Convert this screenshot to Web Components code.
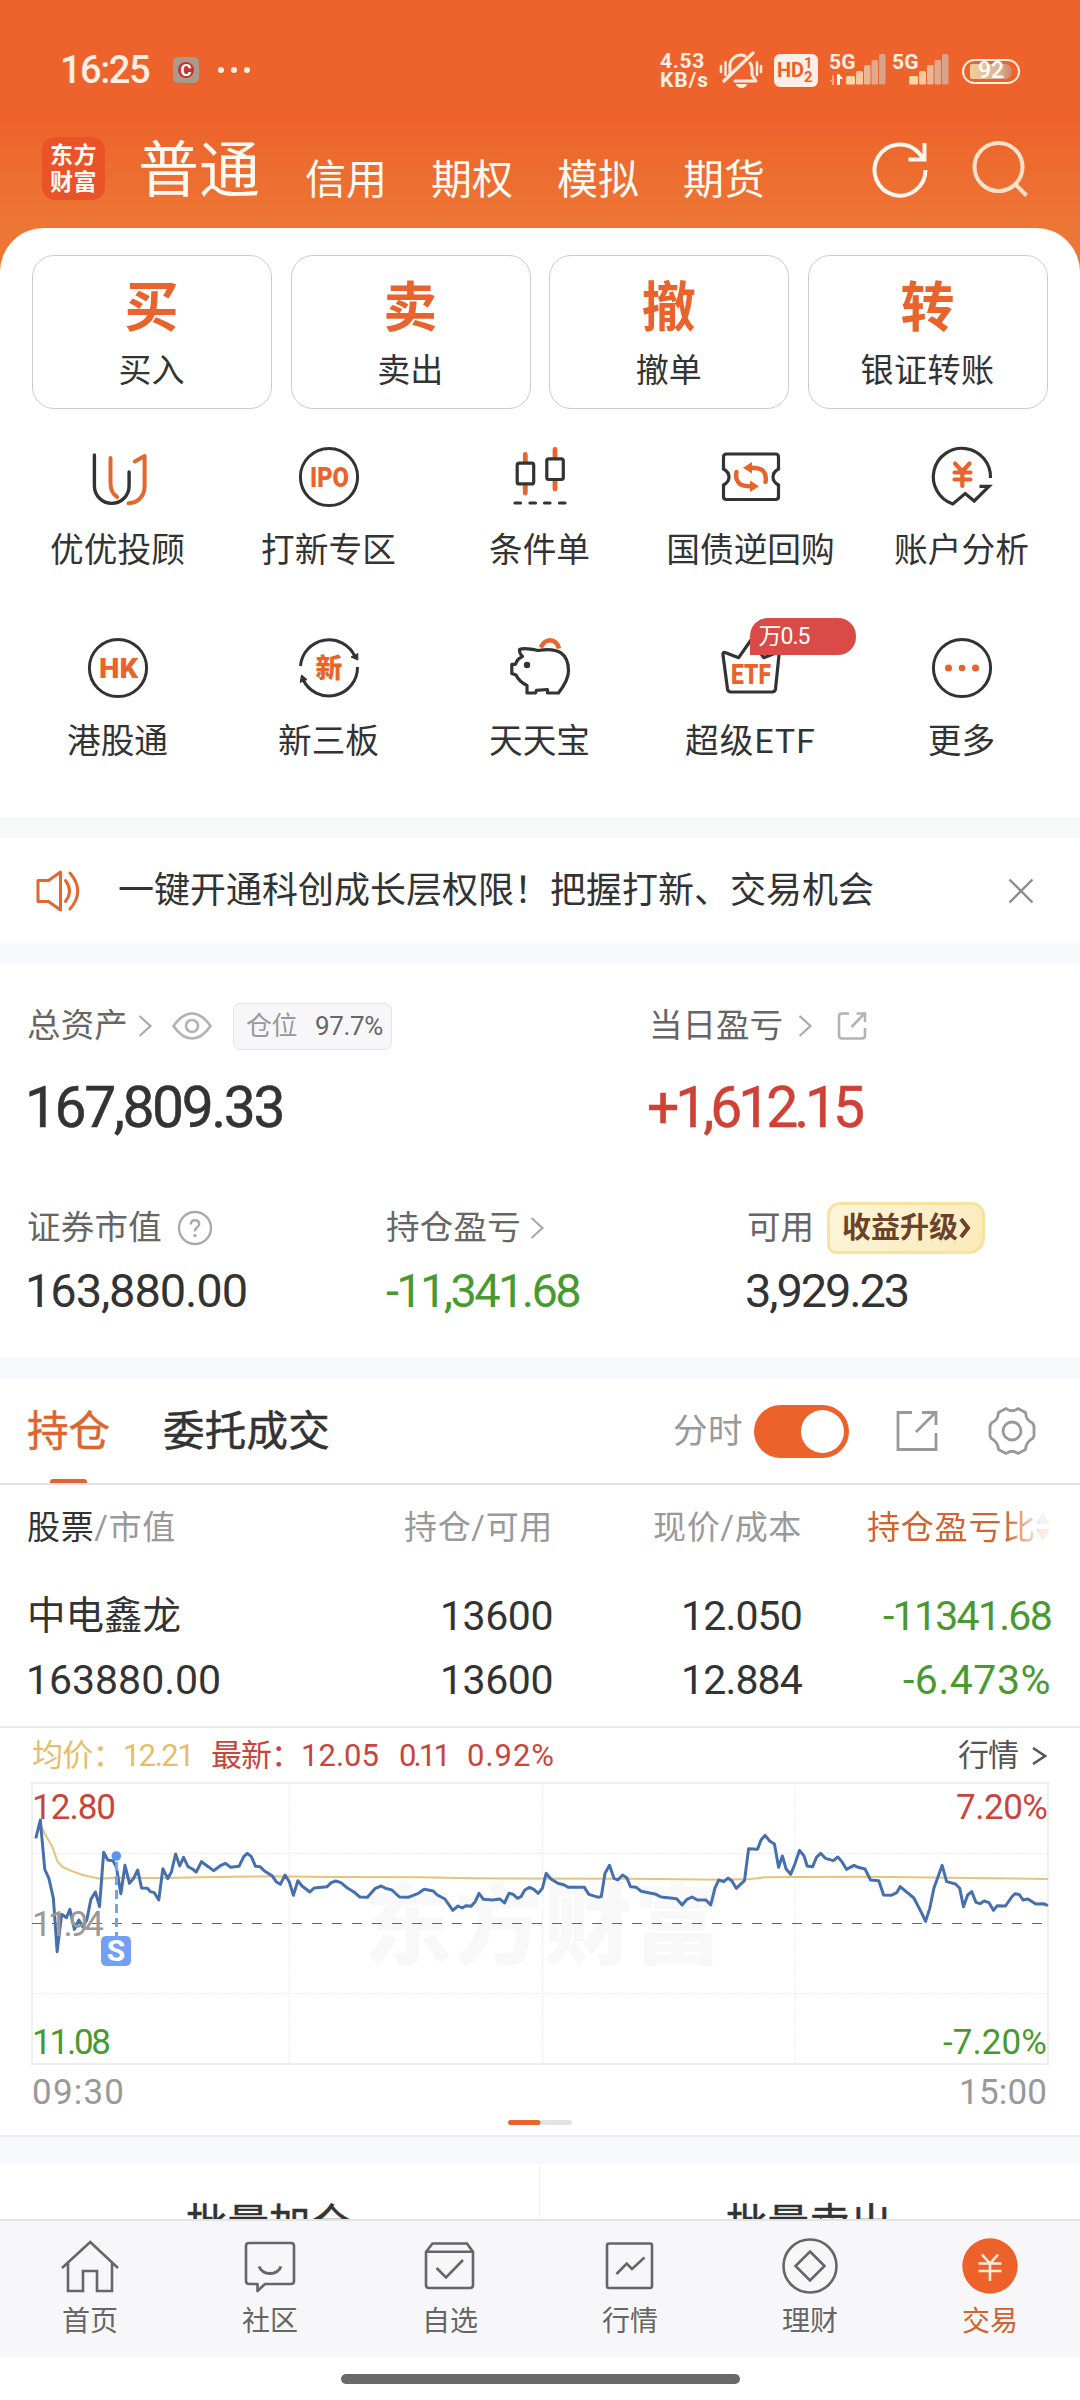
<!DOCTYPE html>
<html lang="zh-CN">
<head>
<meta charset="utf-8">
<title>交易</title>
<style>
    html, body {
        margin: 0;
        padding: 0;
    }

    body {
        width: 1080px;
        height: 2400px;
        overflow: hidden;
        background: #fff;
        color: #333;
        font-family: Roboto, "Noto Sans CJK SC", sans-serif;
        line-height: 1;
    }
</style>
</head>
<body>
<trade-app></trade-app>

<script>
const ICONS = {
    mute: [44, 38, `<g fill="none" stroke="#ffe9dd" stroke-width="3" stroke-linecap="round">
        <path d="M11 23V17A11 11 0 0 1 26 5M31 12A11 11 0 0 1 33 20V24L37 30H16" stroke-linejoin="round"/>
        <path d="M5 30L34 2" stroke-width="3.4"/>
        <path d="M2 15V21M6.500 11V24M38 11V24M42 15V21" stroke-width="2.500"/></g>
        <path d="M17 33H28A5.500 4 0 0 1 17 33Z" fill="#ffe9dd"/>`],
    dataArrows: [15, 12, `<path d="M5 1V11H3V8L0 6H3V1Z" fill="#f6a888"/><path d="M8 0H10L14 5H11V11H8Z" fill="#fff"/>`],
    signal: [40, 31, `<rect x="0" y="22" width="9" height="8.500" rx="1.500" fill="#ffd8a8"/><rect x="10" y="17" width="7" height="13.500" rx="1.500" fill="#fac79a"/><rect x="18" y="11" width="6.500" height="19.500" rx="1.500" fill="#ecb692"/><rect x="25.500" y="6" width="6.500" height="24.500" rx="1.500" fill="#e2a98c"/><rect x="33" y="0" width="6.500" height="30.500" rx="1.500" fill="#d9a28b"/>`],
    refresh: [64, 64, `<g fill="none" stroke="#fff6ee" stroke-width="4"><path d="M57.500 33A25.500 25.500 0 1 1 50 15L55 21"/><path d="M56.500 6V22.500H40.500"/></g>`],
    search: [64, 64, `<g fill="none" stroke="#ffe0cc" stroke-width="4"><circle cx="30.500" cy="30" r="24"/><path d="M47 47L58.500 58.500"/></g>`],
    advisor: [60, 60, `<g fill="none" stroke-width="3.400" stroke-linecap="round" stroke-linejoin="round"><path d="M6.400 8V39A17.300 17.300 0 0 0 41.100 39V25" stroke="#333"/><path d="M22.500 11V36Q22.500 46 29.200 50M40.500 56.300C51 56 56.600 48 56.600 39V9L46.800 14.500" stroke="#e2682f" stroke-width="4"/></g>`],
    ipo: [60, 60, `<circle cx="30" cy="30" r="28.600" fill="none" stroke="#333" stroke-width="3"/><text x="11" y="39.800" font-size="27" font-weight="900" fill="#e8642c" textLength="39" lengthAdjust="spacingAndGlyphs">IPO</text>`],
    candles: [60, 60, `<g stroke-linecap="round" fill="#fff"><path d="M15.300 7.500V46M45 2.500V42" stroke="#e2682f" stroke-width="4.800"/><g stroke="#333" stroke-width="3.200"><rect x="7.200" y="16.200" width="16.500" height="20.700" rx="2"/><rect x="36.800" y="11.800" width="16.500" height="20.700" rx="2"/><path d="M5 56H10.500M20 56H25.500M34.500 56H40M49.500 56H55"/></g></g>`],
    bond: [60, 60, `<path d="M5.500 7H54.500Q57.500 7 57.500 10V22Q52 25 52 30Q52 35 57.500 38V49.500Q57.500 52.500 54.500 52.500H5.500Q2.500 52.500 2.500 49.500V38Q8 35 8 30Q8 25 2.500 22V10Q2.500 7 5.500 7Z" fill="none" stroke="#333" stroke-width="3.200"/>
        <g fill="none" stroke="#e8642c" stroke-width="4.400" stroke-linecap="round"><path d="M44.500 35Q46 27 41 23Q38 20.700 30 20.700M15.500 25Q14 33 19 37Q22 39.300 30 39.300"/></g><path d="M22 20.700L31 15V26.400ZM38 39.300L29 33.600V45Z" fill="#e8642c"/>`],
    analysis: [60, 60, `<g fill="none"><path d="M58.500 31A28.600 28.600 0 1 0 20.800 57L33.200 46.500L42.200 54L57 39.300H47.500" stroke="#333" stroke-width="3.200"/><path d="M23 16.500L30.300 24.500L37.500 16.500M30.300 25V39M22.500 25.500H38.500M22.500 32.500H38.500" stroke="#e8642c" stroke-width="4.200" stroke-linecap="round"/></g>`],
    hk: [60, 60, `<circle cx="30" cy="30" r="28.600" fill="none" stroke="#333" stroke-width="3"/><text x="11" y="39.800" font-size="27" font-weight="900" fill="#e8642c" textLength="39" lengthAdjust="spacingAndGlyphs">HK</text>`],
    neeq: [60, 60, `<g fill="none" stroke="#333" stroke-width="3"><path d="M1.500 28A28.600 28.600 0 0 1 56 18.500M58.500 29A28.600 28.600 0 0 1 4 41.500"/></g><path d="M58.800 15.500V22L52 19ZM1.200 44.500L2.500 37L8 41.500Z" fill="#333" stroke="#333" stroke-linejoin="round"/><text x="30" y="40" text-anchor="middle" font-size="27" font-weight="900" fill="#e8642c">新</text>`],
    pig: [60, 60, `<path d="M9.500 11.500Q14 9.500 28 12.500Q58.500 7 58.500 33Q58.500 42 48.500 55H37.500V51.500L26.500 52.300L25.500 55H17V47.500Q9 43.500 6 37L1.800 35.500V26.300H5.500Q7 21 12.500 18.500Q9 15 9.500 11.500Z" fill="none" stroke="#333" stroke-width="3.200" stroke-linejoin="round"/><circle cx="17" cy="27" r="3.200" fill="#333"/><path d="M30.800 9.500Q34 2.500 40 2.200Q47 2.500 49 10.500" fill="none" stroke="#e2682f" stroke-width="4.500"/>`],
    etf: [60, 60, `<path d="M4 14.500L17.700 19.700L30 2L42.800 19.700L56 14.500Q58.500 14 58 17L54.500 51Q54 54 51 54H10Q7 54 6.500 51L2 17Q1.500 14 4 14.500Z" fill="none" stroke="#333" stroke-width="3.200" stroke-linejoin="round"/><text x="10" y="45.500" font-size="27" font-weight="900" fill="#e8642c" textLength="40" lengthAdjust="spacingAndGlyphs">ETF</text>`],
    more: [60, 60, `<circle cx="30" cy="30" r="28.600" fill="none" stroke="#333" stroke-width="3"/><g fill="#e8642c"><circle cx="16.500" cy="30" r="3.600"/><circle cx="30" cy="30" r="3.300"/><circle cx="43.500" cy="30" r="3.600"/></g>`],
    speaker: [48, 42, `<g fill="none" stroke="#e2682f" stroke-width="3" stroke-linejoin="round" stroke-linecap="round"><path d="M2 10.500H12.500L24.500 2V40L12.500 31.500H2ZM24.500 3V39"/><path d="M29.500 10.500Q37.500 21 29.500 31.500M34 3Q49.500 21 34 39"/></g>`],
    close: [26, 26, `<path d="M1.500 1.500L24.500 24.500M24.500 1.500L1.500 24.500" stroke="#8d8d8d" stroke-width="2.400"/>`],
    chevron: [14, 22, `<path d="M1.500 1L12.500 11L1.500 21" fill="none" stroke="#aaa" stroke-width="2.200"/>`],
    eye: [40, 28, `<g fill="none" stroke="#b3b3b3" stroke-width="2.700"><path d="M1.500 14Q10 1.500 20 1.500T38.500 14Q30 26.500 20 26.500T1.500 14Z"/><circle cx="20" cy="14" r="6"/></g>`],
    share: [30, 30, `<g fill="none" stroke="#b3b3b3" stroke-width="2.600"><path d="M12 2.500H5Q2 2.500 2 5.500V24.500Q2 27.500 5 27.500H25Q28 27.500 28 24.500V17M14.500 16L27.500 2.500M19.500 2.500H28V11"/></g>`],
    help: [36, 36, `<circle cx="18" cy="18" r="16" fill="none" stroke="#aaa" stroke-width="2.400"/><path d="M13.800 14.500Q14 10.300 18 10.300T22.200 14Q22.200 16 20 17.500T18 21.300" fill="none" stroke="#aaa" stroke-width="2.400"/><circle cx="18" cy="25.500" r="1.700" fill="#aaa"/>`],
    openLink: [42, 42, `<path d="M16 2.500H2V39.500H40V23M20 22L38 4M26 2.500H40V15" fill="none" stroke="#999" stroke-width="2.800"/>`],
    gear: [48, 50, `<g fill="none" stroke="#999" stroke-width="2.800" stroke-linejoin="round"><path d="M18 2.500Q24 7 30 2.500L37.500 6.500Q38 14.500 44.500 17L46 20V30L44.500 32.500Q38 36 37.500 43.500L30 47.500Q24 43 18 47.500L10.500 43.500Q10 36 3.500 32.500L2 30V20L3.500 17Q10 14.500 10.500 6.500Z"/><circle cx="24" cy="25" r="9"/></g>`],
    home: [60, 60, `<path d="M2 32L30.200 6L58 32M8 27V55H23V35H37V55H52V27" fill="none" stroke="#666" stroke-width="2.600"/>`],
    community: [60, 60, `<g fill="none" stroke="#666" stroke-width="2.600" stroke-linejoin="round"><path d="M9 7H51Q54 7 54 10V45Q54 48 51 48H25L17.500 55V48H9Q6 48 6 45V10Q6 7 9 7Z"/><path d="M19 30.500Q22 37.500 30 37.500T41 30.500" stroke-width="3"/></g>`],
    watchlist: [60, 60, `<path d="M12.500 7.500H47L53 16V49Q53 52 50 52H9Q6 52 6 49V16ZM6 15.700H53M16.600 32L26 41.500L43 24" fill="none" stroke="#666" stroke-width="2.600"/>`],
    market: [60, 60, `<path d="M9 7.500H50Q52 7.500 52 9.500V50Q52 52 50 52H9Q7 52 7 50V9.500Q7 7.500 9 7.500ZM16.500 38L26.700 27.500L32 33L44.500 21.500" fill="none" stroke="#666" stroke-width="2.600"/>`],
    wealth: [60, 60, `<path d="M30 15.500L44.500 30L30 44.500L15.500 30Z" fill="none" stroke="#666" stroke-width="2.600"/><circle cx="30" cy="30" r="26.500" fill="none" stroke="#666" stroke-width="2.600"/>`],
    trade: [60, 60, `<circle cx="30" cy="30" r="27.700" fill="#ec622a"/><path d="M22 18.500L30 27.500L38 18.500M30 27V45M18.500 27.500H41.500M18.500 35H41.500" fill="none" stroke="#ffeade" stroke-width="2.600"/>`],
};

class BaseElement extends HTMLElement {
    constructor() {
        super();
        this.attachShadow({ mode: "open" });
        this.shadowRoot.innerHTML = this.render();
    }

    render() {
        return "<slot></slot>";
    }
}

window.customElements.define("app-icon", class extends BaseElement {
    render() {
        const [width, height, body] = ICONS[this.getAttribute("name")];
        return `
            <style>
                :host { display: block; flex: none; width: ${width}px; height: ${height}px; }
                svg { display: block; overflow: visible; }
            </style>
            <svg width="${width}" height="${height}" viewBox="0 0 ${width} ${height}">${body}</svg>
        `;
    }
});

window.customElements.define("status-bar", class extends BaseElement {
    render() {
        return `
            <style>
                :host { display: flex; align-items: center; height: 140px; padding: 0 60px 0 60px; color: #ffeee4; box-sizing: border-box; }
                .time { font-size: 38px; font-weight: 500; }
                .app { width: 26px; height: 26px; margin-left: 24px; border-radius: 5px; background: #a89a8c; display: grid; place-items: center; }
                .app b { width: 16px; height: 16px; border-radius: 8px; background: #c8322c; color: #fff; font-size: 17px; text-align: center; line-height: 16px; }
                .dots { display: flex; gap: 7px; margin-left: 19px; flex: 1; }
                .dots i { width: 6px; height: 6px; border-radius: 3px; background: #ffeee4; }
                .speed { font-size: 21px; font-weight: 700; line-height: 19px; width: 49px; padding-top: 1px; }
                .hd { display: flex; align-items: center; width: 44px; height: 33px; margin-left: 11px; border-radius: 6px; background: #ffeee8; color: #e8612c; font-weight: 700; font-size: 20px; box-sizing: border-box; padding-left: 3px; }
                .hd span:last-child { font-size: 15px; line-height: 14px; }
                .cell { display: grid; grid-template-columns: 17px 40px; width: 57px; height: 32px; margin-top: -1px; font-size: 21px; font-weight: 700; }
                .cell > * { grid-row: 1; }
                .cell .net { grid-column: 1 / 3; line-height: 16px; }
                .cell .bars { grid-column: 2; }
                .cell .arrows { grid-column: 1; align-self: end; }
                .battery { display: flex; width: 58px; height: 25px; box-sizing: border-box; margin: 2px 0 0 13px; padding: 3px 6px; border: 2.500px solid #ffeee4; border-radius: 13px; }
                .battery span { flex: 1; border-radius: 2px 7px 7px 2px; background: linear-gradient(90deg, #f0cf98, #dbb292 70%, #cc866a); font-size: 23px; font-weight: 500; line-height: 14px; text-align: center; color: #fff; }
            </style>
            <fit-text class="time" width="89">16:25</fit-text>
            <div class="app"><b>C</b></div>
            <div class="dots"><i></i><i></i><i></i></div>
            <div class="speed"><fit-text width="45">4.53</fit-text><fit-text width="49">KB/s</fit-text></div>
            <app-icon name="mute" style="margin-left: 10px"></app-icon>
            <div class="hd"><fit-text width="27">HD</fit-text><span>1<br>2</span></div>
            <div class="cell" style="margin-left: 11px"><fit-text class="net" width="27">5G</fit-text><app-icon class="bars" name="signal"></app-icon><app-icon class="arrows" name="dataArrows"></app-icon></div>
            <div class="cell" style="margin-left: 6px"><fit-text class="net" width="27">5G</fit-text><app-icon class="bars" name="signal"></app-icon></div>
            <div class="battery"><span>92</span></div>
        `;
    }
});

window.customElements.define("account-header", class extends BaseElement {
    render() {
        return `
            <style>
                :host { display: flex; height: 63px; margin: -3px 48px 0 42px; color: #fff9f2; }
                .logo { display: grid; align-content: center; justify-items: center; gap: 4px; width: 63px; height: 63px; border-radius: 13px; background: #ea5228; font-size: 23px; font-weight: 700; }
                nav { display: flex; align-items: flex-end; flex: 1; gap: 44px; font-size: 41px; padding: 1px 0 0 33px; margin-bottom: -1px; }
                .current { font-size: 61px; margin-right: 1px; margin-bottom: -1px; }
            </style>
            <div class="logo"><fit-text width="47">东方</fit-text><fit-text width="47">财富</fit-text></div>
            <nav>
                <fit-text class="current" width="122">普通</fit-text>
                <fit-text width="82">信用</fit-text>
                <fit-text width="82">期权</fit-text>
                <fit-text width="82">模拟</fit-text>
                <fit-text width="82">期货</fit-text>
            </nav>
            <app-icon name="refresh"></app-icon>
            <app-icon name="search" style="margin-left: 36px"></app-icon>
        `;
    }
});

window.customElements.define("action-card", class extends BaseElement {
    render() {
        return `
            <style>
                :host { display: flex; flex-direction: column; align-items: center; box-sizing: border-box; height: 154px; padding: 26px 1px 0 0; border: 1.500px solid #ccc; border-radius: 22px; font-size: 33px; }
                b { margin-bottom: 18px; color: #e8642c; font-size: 54px; line-height: 54px; }
            </style>
            <b>${this.getAttribute("mark")}</b>
            <slot></slot>
        `;
    }
});

window.customElements.define("quick-entry", class extends BaseElement {
    render() {
        const badge = this.getAttribute("badge");
        return `
            <style>
                :host { display: flex; flex-direction: column; align-items: center; gap: 27px; font-size: 33.700px; }
                .art { position: relative; }
                .badge { position: absolute; left: 29px; top: -20px; width: 106px; height: 37px; box-sizing: border-box; padding-left: 9px; border-radius: 18px 18px 18px 0; background: #da4a46; color: #fff; font-size: 23px; line-height: 37px; }
            </style>
            <div class="art">
                <app-icon name="${this.getAttribute("icon")}"></app-icon>
                ${badge ? `<div class="badge"><fit-text width="51">${badge}</fit-text></div>` : ""}
            </div>
            <slot></slot>
        `;
    }
});

window.customElements.define("notice-bar", class extends BaseElement {
    render() {
        return `
            <style>
                :host { display: flex; align-items: center; height: 105px; padding: 0 46px 0 36px; font-size: 36px; background: #fff; }
                slot { display: block; flex: 1; margin-left: 34px; }
            </style>
            <app-icon name="speaker"></app-icon>
            <slot></slot>
            <app-icon name="close"></app-icon>
        `;
    }
});

window.customElements.define("asset-panel", class extends BaseElement {
    render() {
        return `
            <style>
                :host { display: block; height: 394px; box-sizing: border-box; padding: 36px 27px 0; background: #fff; }
                .row { display: grid; grid-template-columns: 622px 1fr; }
                .detail { grid-template-columns: 359px 361px 1fr; margin-top: 66px; }
                .label { display: flex; align-items: center; height: 52px; color: #666; font-size: 33.500px; }
                .total { font-size: 57px; margin: 27px 0 0 -2px; display: block; -webkit-text-stroke: .5px; }
                .value { font-size: 47px; margin: 13px 0 0 -2px; display: block; }
                .tag { display: flex; align-items: center; box-sizing: border-box; width: 159px; height: 47px; margin-left: 21px; padding-left: 12px; gap: 18px; border: 1.500px solid #e3e4e8; border-radius: 7px; background: #f7f7fa; font-size: 26px; color: #999; }
                .tag fit-text:last-child { color: #666; }
                .red { color: #cf4036; }
                .green { color: #489a30; margin-left: 0; }
                .upgrade { display: flex; align-items: center; gap: 1px; box-sizing: border-box; width: 158px; height: 52px; margin-left: 13px; padding-left: 12px; border: 3px solid #f6e49c; border-radius: 13px 13px 16px 9px; background: linear-gradient(135deg, #fef5dc, #fbe9b8); color: #6a432a; font-size: 29px; font-weight: 700; }
            </style>
            <div class="row">
                <div>
                    <div class="label">
                        <fit-text width="101">总资产</fit-text>
                        <app-icon name="chevron" style="margin-left: 10px"></app-icon>
                        <app-icon name="eye" style="margin-left: 20px"></app-icon>
                        <div class="tag"><fit-text width="51">仓位</fit-text><fit-text width="68">97.7%</fit-text></div>
                    </div>
                    <fit-text class="total" width="258">167,809.33</fit-text>
                </div>
                <div>
                    <div class="label">
                        <fit-text width="134">当日盈亏</fit-text>
                        <app-icon name="chevron" style="margin-left: 15px"></app-icon>
                        <app-icon name="share" style="margin-left: 25px"></app-icon>
                    </div>
                    <fit-text class="total red" width="214">+1,612.15</fit-text>
                </div>
            </div>
            <div class="row detail">
                <div>
                    <div class="label"><fit-text width="135">证券市值</fit-text><app-icon name="help" style="margin-left: 15px"></app-icon></div>
                    <fit-text class="value" width="222">163,880.00</fit-text>
                </div>
                <div>
                    <div class="label"><fit-text width="135">持仓盈亏</fit-text><app-icon name="chevron" style="margin-left: 9px"></app-icon></div>
                    <fit-text class="value green" width="193">-11,341.68</fit-text>
                </div>
                <div>
                    <div class="label">
                        <fit-text width="67">可用</fit-text>
                        <div class="upgrade"><fit-text width="116">收益升级</fit-text>
                            <svg width="12" height="26" viewBox="0 0 12 26"><path d="M2 4L9 13L2 22" fill="none" stroke="#6a432a" stroke-width="4"/></svg>
                        </div>
                    </div>
                    <fit-text class="value" width="163">3,929.23</fit-text>
                </div>
            </div>
        `;
    }
});

window.customElements.define("toggle-switch", class extends BaseElement {
    render() {
        return `
            <style>
                :host { display: flex; justify-content: flex-end; box-sizing: border-box; width: 95px; height: 53px; padding: 5px; border-radius: 27px; background: #ec622a; }
                i { width: 43px; height: 43px; border-radius: 50%; background: #fff; }
            </style>
            <i></i>
        `;
    }
});

window.customElements.define("holding-table", class extends BaseElement {
    render() {
        return `
            <style>
                :host { display: block; height: 243px; box-sizing: border-box; padding: 19px 29px 0 27px; border-bottom: 2px solid #ebebeb; }
                .line { display: grid; grid-template-columns: 278px 248px 249px 249px; align-items: center; height: 46px; }
                .line > :not(:first-child) { justify-self: end; }
                .head { color: #999; font-size: 33px; margin-bottom: 42px; }
                .head span { color: #333; }
                .data { font-size: 41px; height: 48px; margin-bottom: 16px; }
                .name { font-size: 38.500px; }
                .green { color: #489a30; }
                .sort { display: flex; align-items: center; width: 184px; color: #d2652f; -webkit-mask-image: linear-gradient(90deg, #000 75%, rgba(0, 0, 0, .35) 89%, rgba(0, 0, 0, .12) 95%); mask-image: linear-gradient(90deg, #000 75%, rgba(0, 0, 0, .35) 89%, rgba(0, 0, 0, .12) 95%); }
            </style>
            <div class="line head">
                <fit-text width="149"><span>股票</span>/市值</fit-text>
                <fit-text width="149">持仓/可用</fit-text>
                <fit-text width="149">现价/成本</fit-text>
                <div class="sort"><fit-text width="169">持仓盈亏比</fit-text><svg width="14" height="30" viewBox="0 0 14 30"><path d="M7 0L14 12H0Z" fill="#999"/><path d="M0 17H14L7 29Z" fill="#ec622a"/></svg></div>
            </div>
            <div class="line data">
                <fit-text class="name" width="154">中电鑫龙</fit-text>
                <fit-text width="113">13600</fit-text>
                <fit-text width="121">12.050</fit-text>
                <fit-text class="green" width="168">-11341.68</fit-text>
            </div>
            <div class="line data">
                <fit-text width="195" style="margin-left: -1px">163880.00</fit-text>
                <fit-text width="113">13600</fit-text>
                <fit-text width="121">12.884</fit-text>
                <fit-text class="green" width="148">-6.473%</fit-text>
            </div>
        `;
    }
});

// Price points are plotted on a 3136 x 1110 raster and scaled down to the chart box.
window.customElements.define("minute-chart", class extends BaseElement {
    render() {
        const price = `104,205 117,150 130,298 142,325 155,385 166,545 179,433 193,443 203,418 216,478 229,450 240,470 252,450 264,388 277,366 289,410 301,247 313,270 328,272 338,292 351,371 363,286 376,340 388,325 400,300 411,354 428,355 437,365 448,368 461,390 473,296 487,326 498,305 510,252 522,288 533,262 546,290 559,297 570,306 585,275 605,290 620,302 640,287 655,280 670,292 694,289 708,260 718,250 730,260 742,289 755,290 768,303 790,317 802,335 814,343 828,315 840,335 852,376 865,332 877,348 900,366 912,354 950,350 962,338 975,333 990,338 1010,355 1028,366 1045,381 1067,382 1090,355 1107,348 1120,355 1138,360 1160,381 1185,382 1215,370 1232,358 1258,363 1270,375 1292,387 1315,421 1330,408 1342,414 1354,407 1368,409 1380,395 1391,370 1404,388 1430,390 1452,387 1465,399 1478,370 1490,373 1503,385 1513,380 1524,360 1538,352 1550,358 1563,370 1575,355 1586,310 1600,327 1620,340 1637,344 1650,352 1697,352 1710,373 1738,382 1746,380 1757,310 1770,286 1783,325 1794,330 1808,315 1820,323 1831,350 1848,352 1862,364 1905,373 1920,381 1965,386 1981,405 1995,388 2010,381 2025,390 2050,390 2064,405 2076,355 2087,330 2102,335 2114,324 2125,332 2138,355 2162,332 2174,236 2200,238 2210,210 2222,196 2235,213 2249,222 2261,292 2272,258 2283,297 2296,313 2308,283 2322,241 2335,258 2344,288 2360,290 2371,262 2383,250 2397,265 2420,272 2433,261 2445,275 2458,298 2480,286 2492,292 2512,297 2528,330 2552,332 2566,375 2588,376 2604,368 2614,350 2628,362 2654,384 2677,430 2688,454 2700,415 2712,355 2736,286 2749,335 2775,342 2787,355 2798,410 2810,375 2822,365 2834,397 2846,401 2858,393 2872,398 2885,421 2896,407 2920,408 2938,381 2948,371 2960,374 2971,390 2985,387 3008,402 3030,401 3043,407`;
        const average = `117,165 135,200 152,230 166,272 180,290 205,302 240,315 290,326 330,323 480,324 620,321 780,319 960,321 1220,322 1380,325 1840,326 2100,329 2180,327 2220,322 2300,321 2520,320 2640,322 2820,324 3043,327`;
        return `
            <style>
                :host { display: block; height: 367px; border-bottom: 2px solid #ebebeb; box-sizing: border-box; }
                svg { display: block; font-size: 35px; }
            </style>
            <svg width="1080" height="365" viewBox="0 0 1080 365">
                <text x="364" y="187" font-size="88" font-weight="900" fill="#f8f8f8" textLength="358">东方财富</text>
                <g fill="none">
                    <rect x="32" y="13" width="1016" height="281" stroke="#eee" stroke-width="2"/>
                    <path d="M32 83.500H1048M32 223.500H1048M289 13V294M542.500 13V294M795 13V294" stroke="#e6e6e6" stroke-dasharray="1.500 1.500"/>
                    <path d="M32 153.500H1048" stroke="#666" stroke-width="1.200" stroke-dasharray="10 10"/>
                </g>
                <text x="32" y="49" fill="#c8453d" textLength="84">12.80</text>
                <g transform="scale(.34435 .33333)" fill="none">
                    <polyline points="${average}" stroke="#e8c276" stroke-width="2" vector-effect="non-scaling-stroke"/>
                    <polyline points="${price}" stroke="#456fae" stroke-width="3" stroke-linejoin="round" vector-effect="non-scaling-stroke"/>
                </g>
                <path d="M116.500 92V166" stroke="#76a1e8" stroke-width="3" stroke-dasharray="9 5"/>
                <circle cx="116.300" cy="86" r="4.800" fill="#5b93f2"/>
                <rect x="101" y="166" width="30" height="30" rx="5" fill="#73a0f2"/>
                <text x="116" y="191" fill="#fff" font-size="30" font-weight="700" text-anchor="middle">S</text>
                <text x="32" y="166" fill="#999" textLength="72">11.94</text>
                <text x="32" y="284" fill="#489a30" textLength="79">11.08</text>
                <text x="956" y="49" fill="#c8453d" textLength="92">7.20%</text>
                <text x="943" y="284" fill="#489a30" textLength="104">-7.20%</text>
                <text x="32" y="334" fill="#999" textLength="92">09:30</text>
                <text x="959" y="334" fill="#999" textLength="88">15:00</text>
                <path d="M542 352.500H569.500" stroke="#e3e3e3" stroke-width="5" stroke-linecap="round"/>
                <path d="M510.500 352.500H538" stroke="#e2682f" stroke-width="5" stroke-linecap="round"/>
            </svg>
        `;
    }
});

window.customElements.define("holding-panel", class extends BaseElement {
    render() {
        return `
            <style>
                :host { display: block; height: 758px; background: #fff; }
                .tabs { display: flex; align-items: center; box-sizing: border-box; height: 106px; padding: 0 44px 0 27px; border-bottom: 2px solid #e2e2e2; font-size: 41.500px; }
                .tab { display: flex; flex-direction: column; align-items: center; height: 104px; box-sizing: border-box; }
                .active { padding-top: 32px; color: #dd652f; -webkit-text-stroke: .5px; }
                .active i { width: 37px; height: 6px; margin-top: 26px; border-radius: 3px 3px 0 0; background: #dd652f; }
                .second { margin: 2px auto 0 53px; -webkit-text-stroke: .5px; }
                .minute { color: #999; font-size: 34.500px; margin-right: 11px; }
                .quote { display: flex; align-items: center; box-sizing: border-box; height: 42px; padding: 13px 33px 0 32px; font-size: 31px; color: #c8453d; }
                .avg { color: #e6be69; }
                .link { margin-left: auto; display: flex; align-items: center; gap: 14px; color: #555; }
            </style>
            <div class="tabs">
                <div class="tab active"><fit-text width="83">持仓</fit-text><i></i></div>
                <fit-text class="second" width="167">委托成交</fit-text>
                <fit-text class="minute" width="70">分时</fit-text>
                <toggle-switch></toggle-switch>
                <app-icon name="openLink" style="margin-left: 47px"></app-icon>
                <app-icon name="gear" style="margin-left: 50px"></app-icon>
            </div>
            <holding-table></holding-table>
            <div class="quote">
                <fit-text class="avg" width="91">均价：</fit-text>
                <fit-text class="avg" width="70">12.21</fit-text>
                <fit-text width="90" style="margin-left: 18px">最新：</fit-text>
                <fit-text width="78">12.05</fit-text>
                <fit-text width="49" style="margin-left: 20px">0.11</fit-text>
                <fit-text width="88" style="margin-left: 19px">0.92%</fit-text>
                <span class="link"><fit-text width="60">行情</fit-text><svg width="15" height="18" viewBox="0 0 15 18"><path d="M1 1L13 9L1 17" fill="none" stroke="#555" stroke-width="2.500"/></svg></span>
            </div>
            <minute-chart></minute-chart>
        `;
    }
});

window.customElements.define("batch-actions", class extends BaseElement {
    render() {
        return `
            <style>
                :host { display: grid; grid-template-columns: 1fr 1fr; justify-items: center; height: 56px; overflow: hidden; background: linear-gradient(#f2f2f2, #f2f2f2) 539px 0 / 1px 100% no-repeat #fff; font-size: 41.500px; -webkit-text-stroke: .5px; }
                ::slotted(*) { margin: 40px 2px 0 0; }
            </style>
            <slot></slot>
        `;
    }
});

window.customElements.define("tab-item", class extends BaseElement {
    render() {
        return `
            <style>
                :host { display: flex; flex-direction: column; align-items: center; gap: 12px; padding-top: 15px; color: #666; font-size: 28px; }
                :host([selected]) { color: #d2622e; }
            </style>
            <app-icon name="${this.getAttribute("icon")}"></app-icon>
            <slot></slot>
        `;
    }
});

window.customElements.define("tab-bar", class extends BaseElement {
    render() {
        return `
            <style>
                :host { display: block; height: 181px; margin-top: -1px; background: #fff; }
                nav { display: grid; grid-template-columns: repeat(6, 1fr); box-sizing: border-box; height: 139px; border-top: 2px solid #e3e3e3; background: #f7f7fa; }
                .handle { width: 399px; height: 10px; margin: 16px auto 0; border-radius: 5px; background: #696969; }
            </style>
            <nav><slot></slot></nav>
            <div class="handle"></div>
        `;
    }
});

window.customElements.define("trade-app", class extends BaseElement {
    render() {
        return `
            <style>
                :host { display: flex; flex-direction: column; width: 1080px; height: 2400px; background: #f7f8fa; }
                .top { height: 272px; background: linear-gradient(#ed632b 120px, #ec7735 228px); }
                .sheet { height: 589px; box-sizing: border-box; margin-top: -44px; padding: 27px 32px 0; border-radius: 44px 44px 0 0; background: #fff; }
                .cards { display: grid; grid-template-columns: repeat(4, 1fr); gap: 18.500px; }
                .entries { display: grid; grid-template-columns: repeat(5, 1fr); row-gap: 70.300px; margin: 38px -19px 0 -20px; }
                notice-bar { margin: 21px 0; }
                .fill { height: 21px; }
                batch-actions { margin-top: 27px; }
            </style>
            <div class="top">
                <status-bar></status-bar>
                <account-header></account-header>
            </div>
            <div class="sheet">
                <div class="cards">
                    <action-card mark="买">买入</action-card>
                    <action-card mark="卖">卖出</action-card>
                    <action-card mark="撤">撤单</action-card>
                    <action-card mark="转"><fit-text width="134">银证转账</fit-text></action-card>
                </div>
                <div class="entries">
                    <quick-entry icon="advisor">优优投顾</quick-entry>
                    <quick-entry icon="ipo">打新专区</quick-entry>
                    <quick-entry icon="candles">条件单</quick-entry>
                    <quick-entry icon="bond">国债逆回购</quick-entry>
                    <quick-entry icon="analysis">账户分析</quick-entry>
                    <quick-entry icon="hk">港股通</quick-entry>
                    <quick-entry icon="neeq">新三板</quick-entry>
                    <quick-entry icon="pig">天天宝</quick-entry>
                    <quick-entry icon="etf" badge="万0.5"><fit-text width="131">超级ETF</fit-text></quick-entry>
                    <quick-entry icon="more">更多</quick-entry>
                </div>
            </div>
            <notice-bar><fit-text width="756">一键开通科创成长层权限！把握打新、交易机会</fit-text></notice-bar>
            <asset-panel></asset-panel>
            <div class="fill"></div>
            <holding-panel></holding-panel>
            <batch-actions><fit-text width="166">批量加仓</fit-text><fit-text width="166">批量卖出</fit-text></batch-actions>
            <tab-bar>
                <tab-item icon="home">首页</tab-item>
                <tab-item icon="community">社区</tab-item>
                <tab-item icon="watchlist">自选</tab-item>
                <tab-item icon="market">行情</tab-item>
                <tab-item icon="wealth">理财</tab-item>
                <tab-item icon="trade" selected>交易</tab-item>
            </tab-bar>
        `;
    }
});

// Spreads its text over a given width. Registered last so that it measures finished markup.
window.customElements.define("fit-text", class extends BaseElement {
    render() {
        return `
            <style>
                :host { display: block; flex: none; white-space: nowrap; width: ${this.getAttribute("width")}px; }
                span { display: inline-block; }
            </style>
            <span><slot></slot></span>
        `;
    }

    connectedCallback() {
        const span = this.shadowRoot.querySelector("span");
        const count = [...this.textContent.trim()].length;
        const extra = Number(this.getAttribute("width")) - span.getBoundingClientRect().width;
        this.style.letterSpacing = (extra / count).toFixed(3) + "px";
    }
});
</script>
</body>
</html>
